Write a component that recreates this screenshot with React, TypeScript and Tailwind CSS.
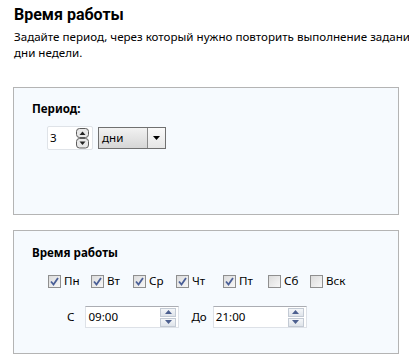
import React from "react";

const days = [
  { label: "Пн", checked: true, w: "w-[43px]" },
  { label: "Вт", checked: true, w: "w-[42px]" },
  { label: "Ср", checked: true, w: "w-[43px]" },
  { label: "Чт", checked: true, w: "w-[47px]" },
  { label: "Пт", checked: true, w: "w-[45px]" },
  { label: "Сб", checked: false, w: "w-[42px]" },
  { label: "Вск", checked: false, w: "" },
];

function CheckBox({ checked }: { checked: boolean }) {
  return (
    <span className="flex h-[13px] w-[13px] shrink-0 items-center justify-center border border-[#8f8f8f] bg-gradient-to-br from-[#dcdcdc] to-[#f7f7f7]">
      {checked && (
        <svg width="9" height="9" viewBox="0 0 9 9">
          <path d="M1 4.5 L3.5 7.5 L8 1" fill="none" stroke="#4a5f97" strokeWidth="1.8" />
        </svg>
      )}
    </span>
  );
}

// round spin buttons of the period field
function RoundSpin() {
  return (
    <svg width="13" height="21" viewBox="0 0 13 21">
      <rect x="0.5" y="0.5" width="12" height="9" rx="3" fill="#e8e8e8" stroke="#5c5c5c" />
      <path d="M3.5 7 L6.5 3.5 L9.5 7 Z" fill="#222" />
      <rect x="0.5" y="10.5" width="12" height="9.5" rx="3" fill="#e8e8e8" stroke="#5c5c5c" />
      <path d="M3.5 13.5 L6.5 17 L9.5 13.5 Z" fill="#222" />
    </svg>
  );
}

// flat spin buttons of the time fields
function TimeSpin() {
  return (
    <div className="flex flex-col gap-px">
      <span className="flex h-[9px] w-[16px] items-center justify-center border border-[#c3cad4] bg-gradient-to-b from-[#f4f6f9] to-[#dfe4ea]">
        <svg width="7" height="4" viewBox="0 0 7 4">
          <path d="M0 4 L3.5 0 L7 4 Z" fill="#4c5f8f" />
        </svg>
      </span>
      <span className="flex h-[9px] w-[16px] items-center justify-center border border-[#c3cad4] bg-gradient-to-b from-[#f4f6f9] to-[#dfe4ea]">
        <svg width="7" height="4" viewBox="0 0 7 4">
          <path d="M0 0 L3.5 4 L7 0 Z" fill="#4c5f8f" />
        </svg>
      </span>
    </div>
  );
}

function TimeField({ value }: { value: string }) {
  return (
    <div className="flex h-[22px] w-[94px] items-center justify-between border border-[#dde1e7] border-t-[#abadb3] bg-white pl-[2px] pr-[2px]">
      <span>{value}</span>
      <TimeSpin />
    </div>
  );
}

export default function App() {
  return (
    <div className="h-[360px] w-[409px] overflow-hidden bg-white text-[11.6px] text-black [font-family:'Noto_Sans',sans-serif]">
      <h1 className="whitespace-nowrap pl-[14px] pt-[4px] text-[16px] font-bold leading-[22px] [font-family:Roboto,sans-serif]">
        Время работы
      </h1>
      <p className="whitespace-nowrap pl-[14px] pt-[3px] leading-[16px]">
        Задайте период, через который нужно повторить выполнение задания в
        <br />
        дни недели.
      </p>

      <div className="ml-[13px] mt-[26px] h-[128px] w-[386px] border border-[#b4b4b4] bg-[#f6fafe] pl-[18px] pt-[13px]">
        <div className="font-bold leading-[16px]">Период:</div>
        <div className="ml-[15px] mt-[9px] flex items-center gap-[5px]">
          <div className="flex h-[24px] w-[46px] items-center justify-between rounded-[2px] border border-[#dfe3e8] bg-white pl-[2px] pr-[3px]">
            <span>3</span>
            <RoundSpin />
          </div>
          <div className="flex h-[22px] w-[68px] items-center justify-between border border-[#707070] bg-gradient-to-b from-[#f2f2f2] to-[#d6d6d6] pl-[3px]">
            <span>дни</span>
            <span className="flex h-[20px] w-[18px] items-center justify-center border-l border-[#8a8a8a] bg-gradient-to-b from-[#fafafa] to-[#e6e6e6]">
              <svg width="7" height="4" viewBox="0 0 7 4">
                <path d="M0 0 L7 0 L3.5 4 Z" fill="#000" />
              </svg>
            </span>
          </div>
        </div>
      </div>

      <div className="ml-[13px] mt-[15px] h-[124px] w-[386px] border border-[#b4b4b4] bg-[#f6fafe] pl-[18px] pt-[14px]">
        <div className="font-bold leading-[16px]">Время работы</div>
        <div className="ml-[16px] mt-[12px] flex items-center">
          {days.map((d) => (
            <div key={d.label} className={"flex items-center gap-[3px] " + d.w}>
              <CheckBox checked={d.checked} />
              <span className="leading-[16px]">{d.label}</span>
            </div>
          ))}
        </div>
        <div className="ml-[35px] mt-[17px] flex items-center">
          <span className="mr-[11px]">С</span>
          <TimeField value="09:00" />
          <span className="ml-[12px] mr-[6px]">До</span>
          <TimeField value="21:00" />
        </div>
      </div>
    </div>
  );
}
